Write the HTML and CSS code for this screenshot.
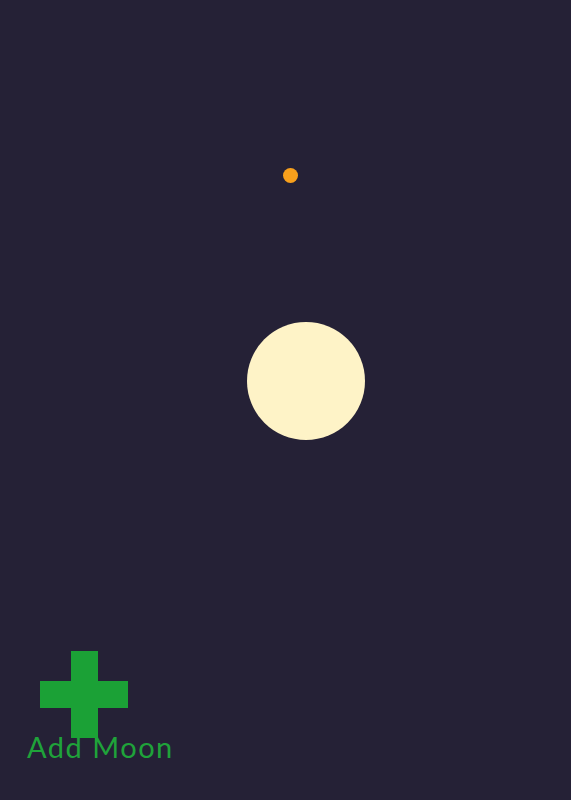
FILE: index.html
```html
<!DOCTYPE html>
<html lang="en">
<head>
<meta charset="UTF-8">
<title>Moons</title>
<link rel="stylesheet" href="styles.css">
</head>
<body>

<div class="space">
  <div class="sky">
    <div class="planet"></div>
    <div class="sun"></div>
  </div>
  <div class="controls">
    <button type="button" class="add-moon">
      <span class="plus"></span>
      <span class="label">Add Moon</span>
    </button>
  </div>
</div>

</body>
</html>
```

FILE: styles.css
```css
* {
  box-sizing: border-box;
  padding: 0px;
  margin: 0px;
}

body {
  background-color: #252136;
  font-family: Lato, "Open Sans", sans-serif;
}

.space {
  display: flex;
  flex-direction: column;
  height: 100vh;
}

.sky {
  position: relative;
  flex: 1;
}

/* bodies sit on a free canvas, so their spot is the content */
.sun {
  position: absolute;
  left: 247px;
  top: 322px;
  width: 118px;
  height: 118px;
  border-radius: 50%;
  background-color: #fef3c7;
}

.planet {
  position: absolute;
  left: 283px;
  top: 168px;
  width: 15px;
  height: 15px;
  border-radius: 50%;
  background-color: #f8a01c;
}

.controls {
  padding: 0px 0px 39px 27px;
}

.add-moon {
  display: flex;
  flex-direction: column;
  align-items: flex-start;
  background: none;
  border: none;
  cursor: pointer;
  color: #1fa33a;
  font-family: inherit;
}

.plus {
  position: relative;
  width: 88px;
  height: 87px;
  margin-left: 13px;
}

.plus::before,
.plus::after {
  content: "";
  position: absolute;
  background-color: #1ba136;
}

.plus::before {
  left: 31px;
  top: 0px;
  width: 27px;
  height: 87px;
}

.plus::after {
  left: 0px;
  top: 30px;
  width: 88px;
  height: 27px;
}

.label {
  font-size: 29px;
  line-height: 29px;
  letter-spacing: 1.5px;
  margin-top: -6px;
}
```
